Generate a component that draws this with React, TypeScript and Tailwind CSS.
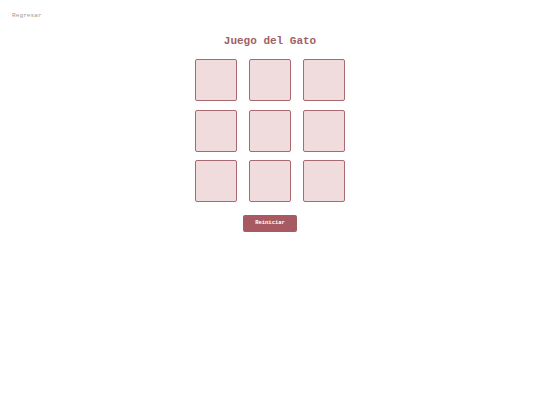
import { useState } from 'react';

export default function App() {
  const [board, setBoard] = useState<(string | null)[]>(Array(9).fill(null));
  const [turn, setTurn] = useState('X');

  const play = (i: number) => {
    if (board[i]) return;
    const next = [...board];
    next[i] = turn;
    setBoard(next);
    setTurn(turn === 'X' ? 'O' : 'X');
  };

  const reset = () => {
    setBoard(Array(9).fill(null));
    setTurn('X');
  };

  return (
    <div className="min-h-[405px] w-full bg-white font-['Liberation_Mono',monospace]">
      <div className="px-3 pt-[12px] leading-[8px]">
        <a href="#" className="block text-[6.2px] leading-[8px] text-[#a8969a]">Regresar</a>
      </div>
      <div className="flex flex-col items-center">
        <h1 className="mt-[14px] text-[11px] font-bold leading-[14px] text-[#a05f65]">Juego del Gato</h1>
        <div className="mt-[11px] grid grid-cols-3 gap-x-[12px] gap-y-[8.5px]">
          {board.map((cell, i) => (
            <button
              key={i}
              onClick={() => play(i)}
              className="flex h-[42px] w-[42px] items-center justify-center rounded-[2px] border border-[#a86a70] bg-[#f0dcdc] text-[16px] font-bold text-[#9b5a60]"
            >
              {cell}
            </button>
          ))}
        </div>
        <button
          onClick={reset}
          className="mt-[13px] h-[17px] w-[54px] rounded-[2px] bg-[#a85a62] text-[5.5px] font-bold text-white"
        >
          Reiniciar
        </button>
      </div>
    </div>
  );
}
